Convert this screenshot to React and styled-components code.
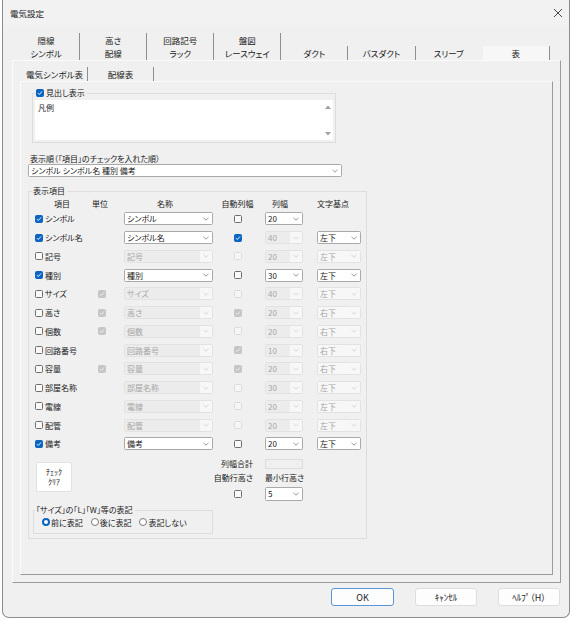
import React from 'react';
import styled, { createGlobalStyle } from 'styled-components';

const GlobalStyle = createGlobalStyle`
  html, body {
    margin: 0;
    padding: 0;
    background: #ffffff;
  }
  body {
    font-family: "Noto Sans CJK JP", "Noto Sans", sans-serif;
    font-size: 8px;
    color: #1a1a1a;
    font-feature-settings: "palt";
  }
  * {
    box-sizing: border-box;
  }
`;

const Window = styled.div`
  margin-left: 2px;
  width: 568px;
  height: 618px;
  background: #f0f0f0;
  border: 1px solid #8c8c8c;
  border-top: none;
  border-radius: 0 0 7px 7px;
  display: flex;
  flex-direction: column;
  overflow: hidden;
`;

const TitleBar = styled.div`
  height: 25px;
  display: flex;
  align-items: center;
  justify-content: space-between;
  padding: 0 6px 0 7px;
  background: #f2f2f2;
  font-size: 8.5px;
  color: #1a1a1a;
`;

const Main = styled.div`
  flex: 1;
  display: flex;
  flex-direction: column;
  padding: 8px 8px 0 9px;
`;

const TabStrip = styled.div`
  margin-left: 1px;
  display: grid;
  grid-template-columns: repeat(8, 67.1px);
  grid-template-rows: 13px 14px;
`;

const Tab = styled.div`
  display: flex;
  align-items: center;
  justify-content: center;
  font-size: 8.5px;
  white-space: nowrap;
  background: ${(p) => (p.$active ? '#f7f7f7' : 'transparent')};
  border-right: 1px solid ${(p) => (p.$noSep ? 'transparent' : '#8e8e8e')};
`;

const Panel = styled.div`
  flex: 1;
  display: flex;
  flex-direction: column;
  padding: ${(p) => p.$pad};
  border-top: 1px solid #fbfbfb;
  border-left: 1px solid #fbfbfb;
  border-right: 1px solid #9c9c9c;
  border-bottom: 1px solid #9c9c9c;
`;

const SubTabs = styled.div`
  display: flex;
  margin-left: 2px;
  height: 14px;
`;

const SubTab = styled.div`
  width: 66px;
  display: flex;
  align-items: center;
  justify-content: center;
  font-size: 8.5px;
  white-space: nowrap;
  border-right: 1px solid #8e8e8e;
`;

const Group = styled.fieldset`
  margin: ${(p) => p.$mt || 0}px 0 0 ${(p) => p.$ml || 0}px;
  padding: 0 ${(p) => p.$px || 0}px ${(p) => p.$pb || 0}px;
  width: ${(p) => p.$w}px;
  min-width: 0;
  border: 1px solid #dddddd;
`;

const Legend = styled.legend`
  margin-left: ${(p) => p.$ml || 0}px;
  padding: 0 2px 0 1px;
  line-height: 10px;
  display: flex;
  align-items: center;
  gap: 2px;
  white-space: nowrap;
`;

const TextBox = styled.div`
  margin-top: 2px;
  height: 40px;
  display: flex;
  background: #ffffff;
`;

const TextBody = styled.div`
  flex: 1;
  padding: 3px 3px;
  line-height: 10px;
`;

const ScrollBar = styled.div`
  width: 11px;
  display: flex;
  flex-direction: column;
  align-items: center;
  justify-content: space-between;
  padding: 5px 0 4px;
`;

const FieldLabel = styled.div`
  margin: 11px 0 0 2px;
  line-height: 10px;
  white-space: nowrap;
`;

const ComboBox = styled.div`
  display: flex;
  width: ${(p) => p.$w}px;
  height: ${(p) => p.$h || 13}px;
  border: 1px solid ${(p) => (p.$disabled ? '#e2e2e2' : '#a9a9a9')};
  border-radius: 1.5px;
  background: ${(p) => (p.$disabled ? '#f7f7f7' : '#ffffff')};
  margin-left: ${(p) => p.$ml || 0}px;
`;

const ComboText = styled.div`
  flex: 1;
  padding-left: 2px;
  line-height: 11px;
  white-space: nowrap;
  overflow: hidden;
  color: ${(p) => (p.$disabled ? '#a6a6a6' : '#1a1a1a')};
  background: ${(p) => (p.$disabled && p.$editable ? '#ececec' : 'transparent')};
`;

const ComboArrow = styled.div`
  width: 12px;
  display: flex;
  align-items: center;
  justify-content: center;
`;

const Box = styled.span`
  flex: none;
  width: 8px;
  height: 8px;
  border-radius: 1.5px;
  display: inline-flex;
  align-items: center;
  justify-content: center;
  margin-left: ${(p) => p.$ml || 0}px;
  border: 1px solid
    ${(p) =>
      p.$checked
        ? p.$disabled
          ? '#c6c6c6'
          : '#0a64c2'
        : p.$disabled
        ? '#dcdcdc'
        : '#6e6e6e'};
  background: ${(p) =>
    p.$checked ? (p.$disabled ? '#c6c6c6' : '#0a64c2') : p.$disabled ? '#f6f6f6' : '#f9f9f9'};
`;

const Grid = styled.div`
  display: grid;
  grid-template-columns: ${(p) => p.$cols};
  grid-auto-rows: ${(p) => p.$row}px;
  align-items: center;
  justify-items: ${(p) => p.$justify || 'stretch'};
  margin: ${(p) => p.$m};
`;

const ItemCell = styled.div`
  display: flex;
  align-items: center;
  gap: 2px;
  margin-left: 1px;
  white-space: nowrap;
`;

const Cell = styled.div`
  display: flex;
  align-items: center;
  justify-content: ${(p) => p.$justify || 'flex-start'};
  padding-left: ${(p) => p.$pl || 0}px;
  padding-right: ${(p) => p.$pr || 0}px;
`;

const HeadCell = styled.div`
  line-height: 10px;
  white-space: nowrap;
`;

const Footer = styled.div`
  display: grid;
  grid-template-columns: 179px 52px 38px;
  grid-template-rows: 10px 10px 14px auto;
  row-gap: 4px;
  margin: 6px 0 4px 5px;
  align-items: center;
`;

const ClearButton = styled.div`
  grid-column: 1;
  grid-row: 1 / span 3;
  align-self: start;
  margin: 3px 0 0 2px;
  width: 36px;
  height: 30px;
  background: #ffffff;
  border: 1px solid #e2e2e2;
  border-radius: 2px;
  display: flex;
  flex-direction: column;
  align-items: center;
  justify-content: center;
  font-size: 8px;
  line-height: 10px;
`;

const FootLabel = styled.div`
  grid-column: 2;
  grid-row: ${(p) => p.$row};
  justify-self: end;
  margin-right: 12px;
  white-space: nowrap;
  line-height: 10px;
`;

const FootCell = styled.div`
  grid-column: ${(p) => p.$col};
  grid-row: ${(p) => p.$row};
  display: flex;
  justify-content: ${(p) => p.$justify || 'flex-start'};
  padding-right: ${(p) => p.$pr || 0}px;
  white-space: nowrap;
  line-height: 10px;
`;

const DisabledField = styled.div`
  width: 38px;
  height: 10px;
  background: #f0f0f0;
  border: 1px solid #dcdcdc;
`;

const SizeRow = styled.div`
  grid-column: 1 / -1;
  grid-row: 4;
  margin-left: -1px;
`;

const RadioRow = styled.div`
  display: flex;
  align-items: center;
  gap: 8px;
  padding: 2px 0 0 8px;
  height: 12px;
`;

const RadioItem = styled.label`
  display: flex;
  align-items: center;
  gap: 1px;
  white-space: nowrap;
`;

const Radio = styled.span`
  width: 8px;
  height: 8px;
  border-radius: 50%;
  background: #ffffff;
  border: ${(p) => (p.$on ? '2.5px solid #0a64c2' : '1px solid #7a7a7a')};
`;

const ButtonRow = styled.div`
  height: 34px;
  display: flex;
  justify-content: flex-end;
  align-items: flex-start;
  gap: 21px;
  padding: 5px 9px 0 0;
`;

const Button = styled.div`
  width: ${(p) => p.$w}px;
  height: 18px;
  display: flex;
  align-items: center;
  justify-content: center;
  background: #fdfdfd;
  border: 1px solid ${(p) => (p.$primary ? '#5b95d6' : '#dedede')};
  border-radius: 3px;
  font-size: 9px;
  white-space: nowrap;
`;

const Chevron = ({ disabled }) => (
  <svg width="6" height="4" viewBox="0 0 6 4">
    <polyline
      points="0.5,0.8 3,3.2 5.5,0.8"
      fill="none"
      stroke={disabled ? '#cfcfcf' : '#808080'}
      strokeWidth="0.8"
    />
  </svg>
);

const Combo = ({ value, width, disabled, editable, ml, h }) => (
  <ComboBox $w={width} $disabled={disabled} $ml={ml} $h={h}>
    <ComboText $disabled={disabled} $editable={editable}>
      {value}
    </ComboText>
    <ComboArrow>
      <Chevron disabled={disabled} />
    </ComboArrow>
  </ComboBox>
);

const Check = ({ checked, disabled, ml }) => (
  <Box $checked={checked} $disabled={disabled} $ml={ml}>
    {checked && (
      <svg width="6" height="6" viewBox="0 0 6 6">
        <polyline
          points="0.9,3.1 2.3,4.5 5.1,1.4"
          fill="none"
          stroke={disabled ? '#f2f2f2' : '#ffffff'}
          strokeWidth="0.9"
        />
      </svg>
    )}
  </Box>
);

const Arrow = ({ up }) => (
  <svg width="6" height="4" viewBox="0 0 6 4">
    <polygon points={up ? '0,4 3,0.5 6,4' : '0,0 3,3.5 6,0'} fill="#a0a0a0" />
  </svg>
);

// [label, on, unit, autoChecked, autoEnabled, width, widthEnabled, base, baseEnabled]
const rows = [
  ['シンボル', true, null, false, true, '20', true, null, false],
  ['シンボル名', true, null, true, true, '40', false, '左下', true],
  ['記号', false, null, false, false, '20', false, '左下', false],
  ['種別', true, null, false, true, '30', true, '左下', true],
  ['サイズ', false, true, false, false, '40', false, '左下', false],
  ['高さ', false, true, true, false, '20', false, '右下', false],
  ['個数', false, true, false, false, '20', false, '右下', false],
  ['回路番号', false, null, true, false, '10', false, '右下', false],
  ['容量', false, true, true, false, '20', false, '右下', false],
  ['部屋名称', false, null, false, false, '30', false, '左下', false],
  ['電線', false, null, false, false, '20', false, '左下', false],
  ['配管', false, null, false, false, '20', false, '左下', false],
  ['備考', true, null, false, true, '20', true, '左下', true],
];

const topTabs = ['隠線', '高さ', '回路記号', '盤図'];
const mainTabs = ['シンボル', '配線', 'ラック', 'レースウェイ', 'ダクト', 'バスダクト', 'スリーブ', '表'];

export default function App() {
  return (
    <>
      <GlobalStyle />
      <Window>
        <TitleBar>
          <span>電気設定</span>
          <svg width="10" height="10" viewBox="0 0 10 10">
            <path d="M1 1 L9 9 M9 1 L1 9" stroke="#333" strokeWidth="0.9" />
          </svg>
        </TitleBar>

        <Main>
          <TabStrip>
            {topTabs.map((t) => (
              <Tab key={t}>{t}</Tab>
            ))}
            <div />
            <div />
            <div />
            <div />
            {mainTabs.map((t, i) => (
              <Tab key={t} $active={i === 7} $noSep={i === 6}>
                {t}
              </Tab>
            ))}
          </TabStrip>

          <Panel $pad="6px 7px 7px 7px">
            <SubTabs>
              <SubTab>電気シンボル表</SubTab>
              <SubTab>配線表</SubTab>
            </SubTabs>

            <Panel $pad="0 0 0 7px">
              <Group $mt={6} $ml={4} $w={304} $px={2} $pb={2}>
                <Legend $ml={0}>
                  <Check checked />
                  見出し表示
                </Legend>
                <TextBox>
                  <TextBody>凡例</TextBody>
                  <ScrollBar>
                    <Arrow up />
                    <Arrow />
                  </ScrollBar>
                </TextBox>
              </Group>

              <FieldLabel>表示順（「項目」のチェックを入れた順）</FieldLabel>
              <Combo value="シンボル シンボル名 種別 備考" width={314} />

              <Group $mt={9} $w={339}>
                <Legend $ml={3}>表示項目</Legend>

                <Grid
                  $cols="56px 20px 110px 35px 50px 56px"
                  $row={10.5}
                  $justify="center"
                  $m="3px 0 0 5px"
                >
                  <HeadCell>項目</HeadCell>
                  <HeadCell>単位</HeadCell>
                  <HeadCell>名称</HeadCell>
                  <HeadCell>自動列幅</HeadCell>
                  <HeadCell>列幅</HeadCell>
                  <HeadCell>文字基点</HeadCell>
                </Grid>

                <Grid $cols="62px 28px 89px 52px 38px 58px" $row={18.75} $m="0 0 0 5px">
                  {rows.map(([label, on, unit, auto, autoOn, width, widthOn, base, baseOn]) => (
                    <React.Fragment key={label}>
                      <ItemCell>
                        <Check checked={on} />
                        {label}
                      </ItemCell>
                      <Cell $pl={2}>{unit && <Check checked disabled />}</Cell>
                      <Cell>
                        <Combo value={label} width={89} disabled={!on} editable />
                      </Cell>
                      <Cell $justify="center" $pr={3}>
                        <Check checked={auto} disabled={!autoOn} />
                      </Cell>
                      <Cell>
                        <Combo value={width} width={38} disabled={!widthOn} editable />
                      </Cell>
                      <Cell $pl={14}>
                        {base && <Combo value={base} width={44} disabled={!baseOn} />}
                      </Cell>
                    </React.Fragment>
                  ))}
                </Grid>

                <Footer>
                  <ClearButton>
                    <span>ﾁｪｯｸ</span>
                    <span>ｸﾘｱ</span>
                  </ClearButton>
                  <FootLabel $row={1}>列幅合計</FootLabel>
                  <FootCell $col={3} $row={1}>
                    <DisabledField />
                  </FootCell>
                  <FootLabel $row={2}>自動行高さ</FootLabel>
                  <FootCell $col={3} $row={2}>
                    最小行高さ
                  </FootCell>
                  <FootCell $col={2} $row={3} $justify="center" $pr={3}>
                    <Check />
                  </FootCell>
                  <FootCell $col={3} $row={3}>
                    <Combo value="5" width={38} h={14} />
                  </FootCell>
                  <SizeRow>
                    <Group $w={180} $pb={6}>
                      <Legend $ml={1}>「サイズ」の「L」「W」等の表記</Legend>
                      <RadioRow>
                        <RadioItem>
                          <Radio $on />
                          前に表記
                        </RadioItem>
                        <RadioItem>
                          <Radio />
                          後に表記
                        </RadioItem>
                        <RadioItem>
                          <Radio />
                          表記しない
                        </RadioItem>
                      </RadioRow>
                    </Group>
                  </SizeRow>
                </Footer>
              </Group>
            </Panel>
          </Panel>
        </Main>

        <ButtonRow>
          <Button $w={63} $primary>
            OK
          </Button>
          <Button $w={62}>ｷｬﾝｾﾙ</Button>
          <Button $w={62}>ﾍﾙﾌﾟ（H）</Button>
        </ButtonRow>
      </Window>
    </>
  );
}
